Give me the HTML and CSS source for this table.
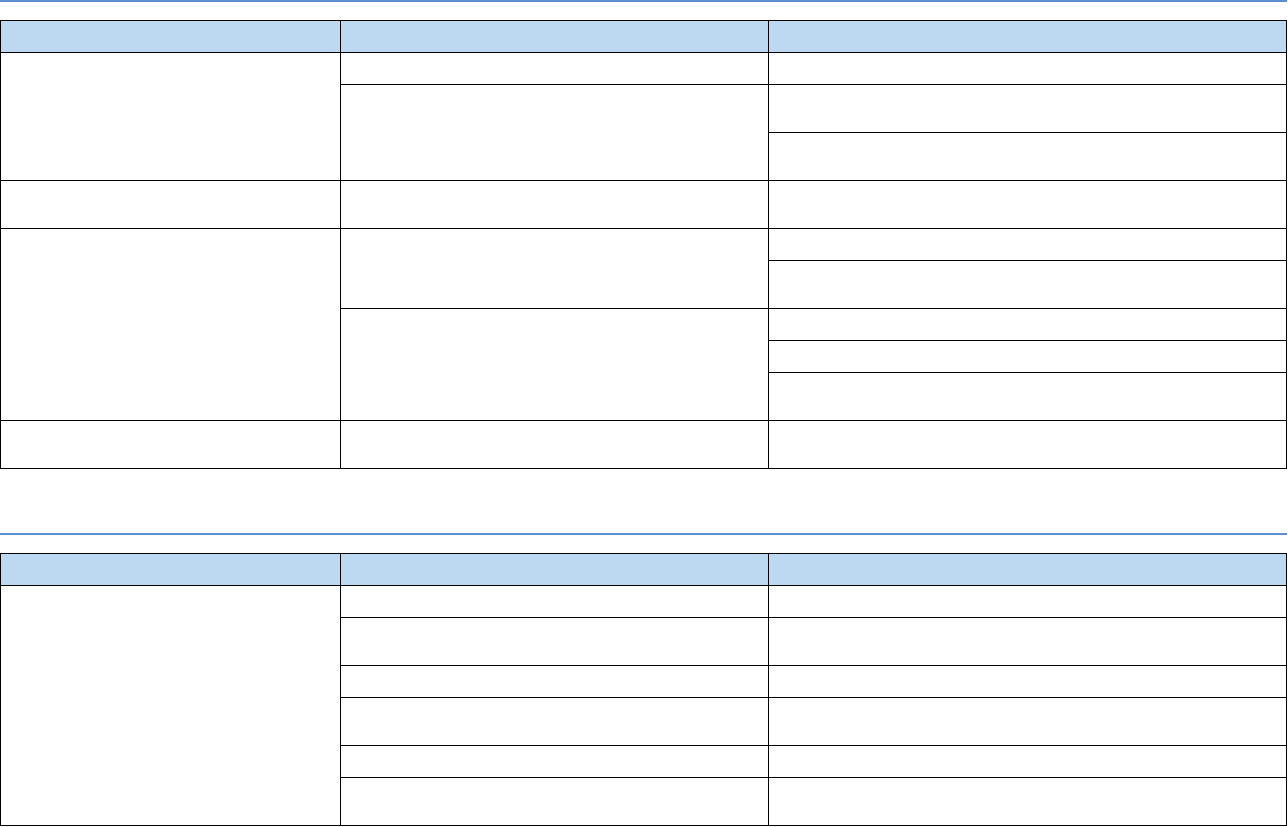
FILE: index.html
```html
<!DOCTYPE html>
<html>
<head>
<meta charset="utf-8">
<link rel="stylesheet" href="styles.css">
</head>
<body>
<section class="section">
  <div class="rule"></div>
  <table class="grid">
    <colgroup><col class="c1"><col class="c2"><col class="c3"></colgroup>
    <thead>
      <tr class="r32"><th></th><th></th><th></th></tr>
    </thead>
    <tbody>
      <tr class="r32"><td rowspan="3"></td><td></td><td></td></tr>
      <tr class="r48"><td rowspan="2"></td><td></td></tr>
      <tr class="r48"><td></td></tr>
      <tr class="r48"><td></td><td></td><td></td></tr>
      <tr class="r32"><td rowspan="5"></td><td rowspan="2"></td><td></td></tr>
      <tr class="r48"><td></td></tr>
      <tr class="r32"><td rowspan="3"></td><td></td></tr>
      <tr class="r32"><td></td></tr>
      <tr class="r48"><td></td></tr>
      <tr class="r48"><td></td><td></td><td></td></tr>
    </tbody>
  </table>
</section>
<section class="section second">
  <div class="rule"></div>
  <table class="grid">
    <colgroup><col class="c1"><col class="c2"><col class="c3"></colgroup>
    <thead>
      <tr class="r32"><th></th><th></th><th></th></tr>
    </thead>
    <tbody>
      <tr class="r32"><td rowspan="6"></td><td></td><td></td></tr>
      <tr class="r48"><td></td><td></td></tr>
      <tr class="r32"><td></td><td></td></tr>
      <tr class="r48"><td></td><td></td></tr>
      <tr class="r32"><td></td><td></td></tr>
      <tr class="r48"><td></td><td></td></tr>
    </tbody>
  </table>
</section>
</body>
</html>
```
FILE: styles.css
```css
html, body {
  margin: 0;
  padding: 0;
  background: #ffffff;
  font-family: "Liberation Sans", Arial, sans-serif;
}
.section {
  width: 1287px;
}
.second {
  margin-top: 64px;
}
.rule {
  height: 2px;
  background: #5b8fd2;
  margin-bottom: 18px;
}
.grid {
  width: 1287px;
  table-layout: fixed;
  border-collapse: collapse;
}
.c1 { width: 340px; }
.c2 { width: 428px; }
.c3 { width: 518px; }
.grid th, .grid td {
  border: 1px solid #000;
  padding: 0;
}
.grid th {
  background: #bdd9f1;
}
.r32 { height: 32px; }
.r48 { height: 48px; }
```
